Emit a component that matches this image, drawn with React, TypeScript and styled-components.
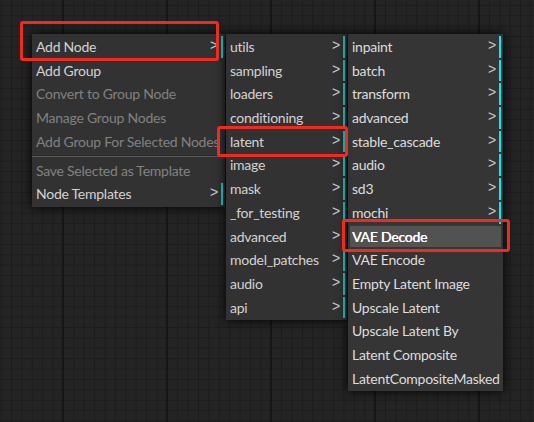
import styled, { createGlobalStyle } from 'styled-components'

const GlobalStyle = createGlobalStyle`
  html, body {
    margin: 0;
    padding: 0;
    background: #222;
  }
`

type Entry = {
  label: string
  submenu?: boolean
  disabled?: boolean
  active?: boolean
  separator?: boolean
}

const mainEntries: Entry[] = [
  { label: 'Add Node', submenu: true },
  { label: 'Add Group' },
  { label: 'Convert to Group Node', disabled: true },
  { label: 'Manage Group Nodes', disabled: true },
  { label: 'Add Group For Selected Nodes', disabled: true },
  { label: '', separator: true },
  { label: 'Save Selected as Template', disabled: true },
  { label: 'Node Templates', submenu: true },
]

const categoryEntries: Entry[] = [
  'utils',
  'sampling',
  'loaders',
  'conditioning',
  'latent',
  'image',
  'mask',
  '_for_testing',
  'advanced',
  'model_patches',
  'audio',
  'api',
].map((label) => ({ label, submenu: true }))

const latentEntries: Entry[] = [
  ...[
    'inpaint',
    'batch',
    'transform',
    'advanced',
    'stable_cascade',
    'audio',
    'sd3',
    'mochi',
  ].map((label) => ({ label, submenu: true })),
  { label: 'VAE Decode', active: true },
  { label: 'VAE Encode' },
  { label: 'Empty Latent Image' },
  { label: 'Upscale Latent' },
  { label: 'Upscale Latent By' },
  { label: 'Latent Composite' },
  { label: 'LatentCompositeMasked' },
]

interface MenuProps {
  entries: Entry[]
  width: number
  dimmed?: boolean
}

function ContextMenu({ entries, width, dimmed = false }: MenuProps) {
  return (
    <Menu $width={width} $dimmed={dimmed}>
      {entries.map((entry, index) =>
        entry.separator ? (
          <Separator key={index} />
        ) : (
          <Item
            key={index}
            $submenu={!!entry.submenu}
            $disabled={!!entry.disabled}
            $active={!!entry.active}
            $dimmed={dimmed}
          >
            {entry.label}
          </Item>
        )
      )}
    </Menu>
  )
}

export default function App() {
  return (
    <>
      <GlobalStyle />
      <Canvas>
        <ContextMenu entries={mainEntries} width={193} dimmed />
        <ContextMenu entries={categoryEntries} width={121} dimmed />
        <ContextMenu entries={latentEntries} width={155} />

        <Highlight style={{ left: 20, top: 21, width: 199, height: 40 }} />
        <Highlight style={{ left: 217, top: 126, width: 131, height: 31 }} />
        <Highlight style={{ left: 342, top: 219, width: 168, height: 33 }} />
      </Canvas>
    </>
  )
}

const Canvas = styled.div`
  position: relative;
  width: 534px;
  height: 422px;
  overflow: hidden;
  box-sizing: border-box;
  padding: 34px 0 0 32px;
  display: flex;
  align-items: flex-start;
  gap: 1px;
  background-color: #242424;
  background-image: linear-gradient(to right, #161616 0 2px, transparent 2px),
    linear-gradient(to right, #1c1c1c 0 1px, transparent 1px),
    linear-gradient(to bottom, #1c1c1c 0 1px, transparent 1px);
  background-size: 104px 100%, 10.4px 10.4px, 10.4px 10.4px;
  background-position: 62px 0, 0.6px 0, 0 4.9px;
`

const Menu = styled.div<{ $width: number; $dimmed: boolean }>`
  width: ${(p) => p.$width}px;
  flex: none;
  box-sizing: border-box;
  display: flex;
  flex-direction: column;
  gap: 2px;
  padding: 2px 0;
  background-color: ${(p) => (p.$dimmed ? '#323232' : '#353535')};
  box-shadow: 0 0 10px #000;
  font-family: Lato, 'Open Sans', sans-serif;
  font-size: 14px;
  letter-spacing: -0.25px;
`

const Item = styled.div<{
  $submenu: boolean
  $disabled: boolean
  $active: boolean
  $dimmed: boolean
}>`
  position: relative;
  height: 21.7px;
  line-height: 22.7px;
  margin: 0 2px;
  padding-left: 2px;
  white-space: nowrap;
  color: ${(p) =>
    p.$disabled ? '#818181' : p.$active ? '#fff' : p.$dimmed ? '#d2d2d2' : '#dddddd'};
  text-shadow: ${(p) => (p.$active ? '0.4px 0 0 #fff' : 'none')};
  background-color: ${(p) => (p.$active ? '#525252' : 'transparent')};
  border-right: 2px solid
    ${(p) => (p.$submenu ? (p.$dimmed ? '#12a9ab' : '#00f0f4') : 'transparent')};

  &::before {
    content: ${(p) => (p.$submenu ? "'>'" : 'none')};
    position: absolute;
    top: -2px;
    right: 3px;
    font-family: 'Liberation Sans', Arial, sans-serif;
    color: #c8c8c8;
  }
`

const Separator = styled.div`
  height: 0;
  margin: 0.6px 0;
  border-top: 1px solid #2a2a2a;
  border-bottom: 1px solid #595959;
`

const Highlight = styled.div`
  position: absolute;
  box-sizing: border-box;
  border: 3px solid #ef2a1f;
  border-radius: 3px;
  pointer-events: none;
`
